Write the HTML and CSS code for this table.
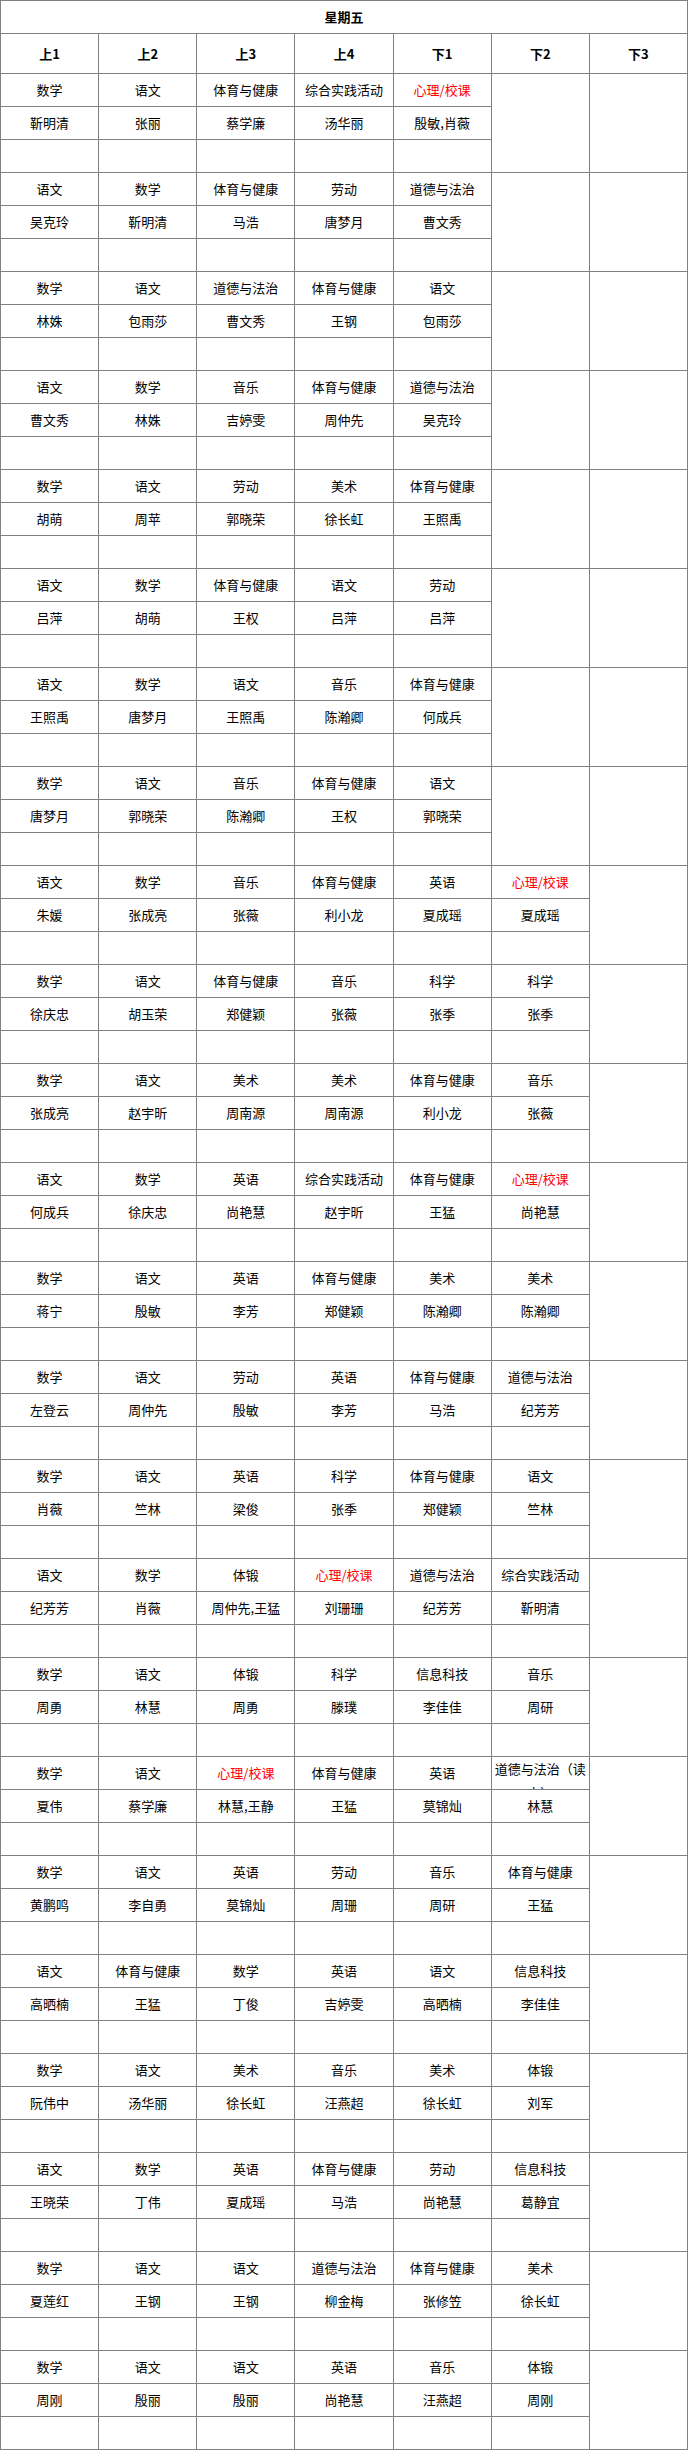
FILE: index.html
```html
<!DOCTYPE html>
<html lang="zh-CN">
<head>
<meta charset="utf-8">
<title>星期五</title>
<link rel="stylesheet" href="styles.css">
</head>
<body>
<table class="tt">
<colgroup><col><col><col><col><col><col><col></colgroup>
<thead>
<tr class="day"><th colspan="7">星期五</th></tr>
<tr class="ph"><th>上1</th><th>上2</th><th>上3</th><th>上4</th><th>下1</th><th>下2</th><th>下3</th></tr>
</thead>
<tbody>
<tr><td>数学</td><td>语文</td><td>体育与健康</td><td>综合实践活动</td><td class="red">心理/校课</td><td rowspan="3"></td><td rowspan="3"></td></tr>
<tr><td>靳明清</td><td>张丽</td><td>蔡学廉</td><td>汤华丽</td><td>殷敏,肖薇</td></tr>
<tr><td></td><td></td><td></td><td></td><td></td></tr>

<tr><td>语文</td><td>数学</td><td>体育与健康</td><td>劳动</td><td>道德与法治</td><td rowspan="3"></td><td rowspan="3"></td></tr>
<tr><td>吴克玲</td><td>靳明清</td><td>马浩</td><td>唐梦月</td><td>曹文秀</td></tr>
<tr><td></td><td></td><td></td><td></td><td></td></tr>

<tr><td>数学</td><td>语文</td><td>道德与法治</td><td>体育与健康</td><td>语文</td><td rowspan="3"></td><td rowspan="3"></td></tr>
<tr><td>林姝</td><td>包雨莎</td><td>曹文秀</td><td>王钢</td><td>包雨莎</td></tr>
<tr><td></td><td></td><td></td><td></td><td></td></tr>

<tr><td>语文</td><td>数学</td><td>音乐</td><td>体育与健康</td><td>道德与法治</td><td rowspan="3"></td><td rowspan="3"></td></tr>
<tr><td>曹文秀</td><td>林姝</td><td>吉婷雯</td><td>周仲先</td><td>吴克玲</td></tr>
<tr><td></td><td></td><td></td><td></td><td></td></tr>

<tr><td>数学</td><td>语文</td><td>劳动</td><td>美术</td><td>体育与健康</td><td rowspan="3"></td><td rowspan="3"></td></tr>
<tr><td>胡萌</td><td>周苹</td><td>郭晓荣</td><td>徐长虹</td><td>王照禹</td></tr>
<tr><td></td><td></td><td></td><td></td><td></td></tr>

<tr><td>语文</td><td>数学</td><td>体育与健康</td><td>语文</td><td>劳动</td><td rowspan="3"></td><td rowspan="3"></td></tr>
<tr><td>吕萍</td><td>胡萌</td><td>王权</td><td>吕萍</td><td>吕萍</td></tr>
<tr><td></td><td></td><td></td><td></td><td></td></tr>

<tr><td>语文</td><td>数学</td><td>语文</td><td>音乐</td><td>体育与健康</td><td rowspan="3"></td><td rowspan="3"></td></tr>
<tr><td>王照禹</td><td>唐梦月</td><td>王照禹</td><td>陈瀚卿</td><td>何成兵</td></tr>
<tr><td></td><td></td><td></td><td></td><td></td></tr>

<tr><td>数学</td><td>语文</td><td>音乐</td><td>体育与健康</td><td>语文</td><td rowspan="3"></td><td rowspan="3"></td></tr>
<tr><td>唐梦月</td><td>郭晓荣</td><td>陈瀚卿</td><td>王权</td><td>郭晓荣</td></tr>
<tr><td></td><td></td><td></td><td></td><td></td></tr>

<tr><td>语文</td><td>数学</td><td>音乐</td><td>体育与健康</td><td>英语</td><td class="red">心理/校课</td><td rowspan="3"></td></tr>
<tr><td>朱媛</td><td>张成亮</td><td>张薇</td><td>利小龙</td><td>夏成瑶</td><td>夏成瑶</td></tr>
<tr><td></td><td></td><td></td><td></td><td></td><td></td></tr>

<tr><td>数学</td><td>语文</td><td>体育与健康</td><td>音乐</td><td>科学</td><td>科学</td><td rowspan="3"></td></tr>
<tr><td>徐庆忠</td><td>胡玉荣</td><td>郑健颖</td><td>张薇</td><td>张季</td><td>张季</td></tr>
<tr><td></td><td></td><td></td><td></td><td></td><td></td></tr>

<tr><td>数学</td><td>语文</td><td>美术</td><td>美术</td><td>体育与健康</td><td>音乐</td><td rowspan="3"></td></tr>
<tr><td>张成亮</td><td>赵宇昕</td><td>周南源</td><td>周南源</td><td>利小龙</td><td>张薇</td></tr>
<tr><td></td><td></td><td></td><td></td><td></td><td></td></tr>

<tr><td>语文</td><td>数学</td><td>英语</td><td>综合实践活动</td><td>体育与健康</td><td class="red">心理/校课</td><td rowspan="3"></td></tr>
<tr><td>何成兵</td><td>徐庆忠</td><td>尚艳慧</td><td>赵宇昕</td><td>王猛</td><td>尚艳慧</td></tr>
<tr><td></td><td></td><td></td><td></td><td></td><td></td></tr>

<tr><td>数学</td><td>语文</td><td>英语</td><td>体育与健康</td><td>美术</td><td>美术</td><td rowspan="3"></td></tr>
<tr><td>蒋宁</td><td>殷敏</td><td>李芳</td><td>郑健颖</td><td>陈瀚卿</td><td>陈瀚卿</td></tr>
<tr><td></td><td></td><td></td><td></td><td></td><td></td></tr>

<tr><td>数学</td><td>语文</td><td>劳动</td><td>英语</td><td>体育与健康</td><td>道德与法治</td><td rowspan="3"></td></tr>
<tr><td>左登云</td><td>周仲先</td><td>殷敏</td><td>李芳</td><td>马浩</td><td>纪芳芳</td></tr>
<tr><td></td><td></td><td></td><td></td><td></td><td></td></tr>

<tr><td>数学</td><td>语文</td><td>英语</td><td>科学</td><td>体育与健康</td><td>语文</td><td rowspan="3"></td></tr>
<tr><td>肖薇</td><td>竺林</td><td>梁俊</td><td>张季</td><td>郑健颖</td><td>竺林</td></tr>
<tr><td></td><td></td><td></td><td></td><td></td><td></td></tr>

<tr><td>语文</td><td>数学</td><td>体锻</td><td class="red">心理/校课</td><td>道德与法治</td><td>综合实践活动</td><td rowspan="3"></td></tr>
<tr><td>纪芳芳</td><td>肖薇</td><td>周仲先,王猛</td><td>刘珊珊</td><td>纪芳芳</td><td>靳明清</td></tr>
<tr><td></td><td></td><td></td><td></td><td></td><td></td></tr>

<tr><td>数学</td><td>语文</td><td>体锻</td><td>科学</td><td>信息科技</td><td>音乐</td><td rowspan="3"></td></tr>
<tr><td>周勇</td><td>林慧</td><td>周勇</td><td>滕璞</td><td>李佳佳</td><td>周研</td></tr>
<tr><td></td><td></td><td></td><td></td><td></td><td></td></tr>

<tr><td>数学</td><td>语文</td><td class="red">心理/校课</td><td>体育与健康</td><td>英语</td><td><div class="clip">道德与法治（读本）</div></td><td rowspan="3"></td></tr>
<tr><td>夏伟</td><td>蔡学廉</td><td>林慧,王静</td><td>王猛</td><td>莫锦灿</td><td>林慧</td></tr>
<tr><td></td><td></td><td></td><td></td><td></td><td></td></tr>

<tr><td>数学</td><td>语文</td><td>英语</td><td>劳动</td><td>音乐</td><td>体育与健康</td><td rowspan="3"></td></tr>
<tr><td>黄鹏鸣</td><td>李自勇</td><td>莫锦灿</td><td>周珊</td><td>周研</td><td>王猛</td></tr>
<tr><td></td><td></td><td></td><td></td><td></td><td></td></tr>

<tr><td>语文</td><td>体育与健康</td><td>数学</td><td>英语</td><td>语文</td><td>信息科技</td><td rowspan="3"></td></tr>
<tr><td>高晒楠</td><td>王猛</td><td>丁俊</td><td>吉婷雯</td><td>高晒楠</td><td>李佳佳</td></tr>
<tr><td></td><td></td><td></td><td></td><td></td><td></td></tr>

<tr><td>数学</td><td>语文</td><td>美术</td><td>音乐</td><td>美术</td><td>体锻</td><td rowspan="3"></td></tr>
<tr><td>阮伟中</td><td>汤华丽</td><td>徐长虹</td><td>汪燕超</td><td>徐长虹</td><td>刘军</td></tr>
<tr><td></td><td></td><td></td><td></td><td></td><td></td></tr>

<tr><td>语文</td><td>数学</td><td>英语</td><td>体育与健康</td><td>劳动</td><td>信息科技</td><td rowspan="3"></td></tr>
<tr><td>王晓荣</td><td>丁伟</td><td>夏成瑶</td><td>马浩</td><td>尚艳慧</td><td>葛静宜</td></tr>
<tr><td></td><td></td><td></td><td></td><td></td><td></td></tr>

<tr><td>数学</td><td>语文</td><td>语文</td><td>道德与法治</td><td>体育与健康</td><td>美术</td><td rowspan="3"></td></tr>
<tr><td>夏莲红</td><td>王钢</td><td>王钢</td><td>柳金梅</td><td>张修笠</td><td>徐长虹</td></tr>
<tr><td></td><td></td><td></td><td></td><td></td><td></td></tr>

<tr><td>数学</td><td>语文</td><td>语文</td><td>英语</td><td>音乐</td><td>体锻</td><td rowspan="3"></td></tr>
<tr><td>周刚</td><td>殷丽</td><td>殷丽</td><td>尚艳慧</td><td>汪燕超</td><td>周刚</td></tr>
<tr><td></td><td></td><td></td><td></td><td></td><td></td></tr>
</tbody>
</table>
</body>
</html>
```

FILE: styles.css
```css
html, body {
  margin: 0;
  padding: 0;
  background: #fff;
}

body {
  font-family: "Noto Sans CJK SC", "Noto Sans", "Liberation Sans", sans-serif;
  font-size: 13px;
  color: #000;
}

.tt {
  width: 688px;
  border-collapse: collapse;
  table-layout: fixed;
}

.tt th,
.tt td {
  border: 1px solid #808080;
  padding: 0 2px;
  text-align: center;
  vertical-align: middle;
  font-size: 13px;
  line-height: 18px;
  white-space: nowrap;
  overflow: hidden;
}

.tt .day th {
  height: 32px;
  font-weight: bold;
}

.tt .ph th {
  height: 39px;
  font-weight: bold;
}

.tt tbody td {
  height: 32px;
}

.tt .red {
  color: #ff0000;
}

.tt .clip {
  height: 32px;
  overflow: hidden;
  white-space: normal;
  line-height: 24px;
}
```
